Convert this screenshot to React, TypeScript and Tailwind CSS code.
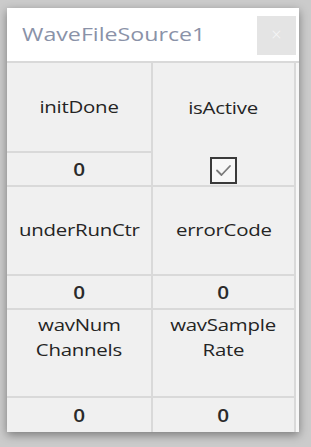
import React from 'react';

const font = { fontFamily: '"Open Sans", "Noto Sans", sans-serif' };

const Label: React.FC<{ lines: string[] }> = ({ lines }) => (
  <div className="flex flex-col items-center text-[17px] font-medium leading-[25px] tracking-[-0.2px] text-[#242424]">
    {lines.map((l) => (
      <span key={l} className="inline-block scale-x-[1.2]">
        {l}
      </span>
    ))}
  </div>
);

const Value: React.FC<{ v: string }> = ({ v }) => (
  <span className="inline-block scale-x-[1.15] text-[18px] font-semibold leading-none text-[#2a2a2a]">{v}</span>
);

const CheckBox: React.FC = () => (
  <div className="flex h-[27px] w-[27px] items-center justify-center border-2 border-[#3a3a3a] bg-[#f7f7f7]">
    <svg width="19" height="19" viewBox="0 0 19 19" fill="none">
      <path d="M3 9.5 L7.5 14 L16 5" stroke="#7a7a7a" strokeWidth="1.8" strokeLinecap="round" strokeLinejoin="round" />
    </svg>
  </div>
);

export default function App() {
  return (
    <div className="h-[447px] w-[311px] bg-[#cbcbcb] pl-[7px] pt-[8px]" style={font}>
      <div className="flex w-[292px] flex-col bg-white shadow-[0_3px_9px_rgba(0,0,0,0.4)]">
        {/* title bar */}
        <div className="flex h-[55px] items-start justify-between border-b-2 border-[#d9d9d9]">
          <span className="mt-[13px] ml-[15px] inline-block origin-left scale-x-[1.22] text-[19px] leading-[27px] text-[#8a92a8]">
            WaveFileSource1
          </span>
          <div className="mt-[8px] mr-[3px] flex h-[39px] w-[39px] items-center justify-center bg-[#e4e4e4] pb-[3px] text-[18px] font-light text-[#f7f7f7]">
            ×
          </div>
        </div>

        {/* grid */}
        <div className="flex bg-[#f7f7f7] pr-[3px]">
          <div className="flex flex-1 flex-col bg-[#f0f0f0] border-r-2 border-[#d9d9d9]">
            {/* row 1 */}
            <div className="flex border-b-2 border-[#d9d9d9]">
              <div className="flex w-[146px] flex-col border-r-2 border-[#d9d9d9]">
                <div className="flex h-[90px] items-center justify-center border-b-2 border-[#d9d9d9] pb-[1px]">
                  <Label lines={['initDone']} />
                </div>
                <div className="flex h-[32px] items-center justify-center">
                  <Value v="0" />
                </div>
              </div>
              <div className="flex flex-1 flex-col items-center">
                <div className="flex h-[90px] items-center justify-center pb-[1px]">
                  <Label lines={['isActive']} />
                </div>
                <div className="mt-[4px]">
                  <CheckBox />
                </div>
              </div>
            </div>

            {/* row 2 */}
            <div className="flex border-b-2 border-[#d9d9d9]">
              <div className="flex w-[146px] flex-col border-r-2 border-[#d9d9d9]">
                <div className="flex h-[89px] items-center justify-center border-b-2 border-[#d9d9d9] pb-[3px]">
                  <Label lines={['underRunCtr']} />
                </div>
                <div className="flex h-[32px] items-center justify-center">
                  <Value v="0" />
                </div>
              </div>
              <div className="flex flex-1 flex-col">
                <div className="flex h-[89px] items-center justify-center border-b-2 border-[#d9d9d9] pb-[3px]">
                  <Label lines={['errorCode']} />
                </div>
                <div className="flex h-[32px] items-center justify-center">
                  <Value v="0" />
                </div>
              </div>
            </div>

            {/* row 3 */}
            <div className="flex">
              <div className="flex w-[146px] flex-col border-r-2 border-[#d9d9d9]">
                <div className="flex h-[88px] justify-center border-b-2 border-[#d9d9d9] pt-[2px]">
                  <Label lines={['wavNum', 'Channels']} />
                </div>
                <div className="flex h-[34px] items-center justify-center">
                  <Value v="0" />
                </div>
              </div>
              <div className="flex flex-1 flex-col">
                <div className="flex h-[88px] justify-center border-b-2 border-[#d9d9d9] pt-[2px]">
                  <Label lines={['wavSample', 'Rate']} />
                </div>
                <div className="flex h-[34px] items-center justify-center">
                  <Value v="0" />
                </div>
              </div>
            </div>
          </div>
        </div>
      </div>
    </div>
  );
}
